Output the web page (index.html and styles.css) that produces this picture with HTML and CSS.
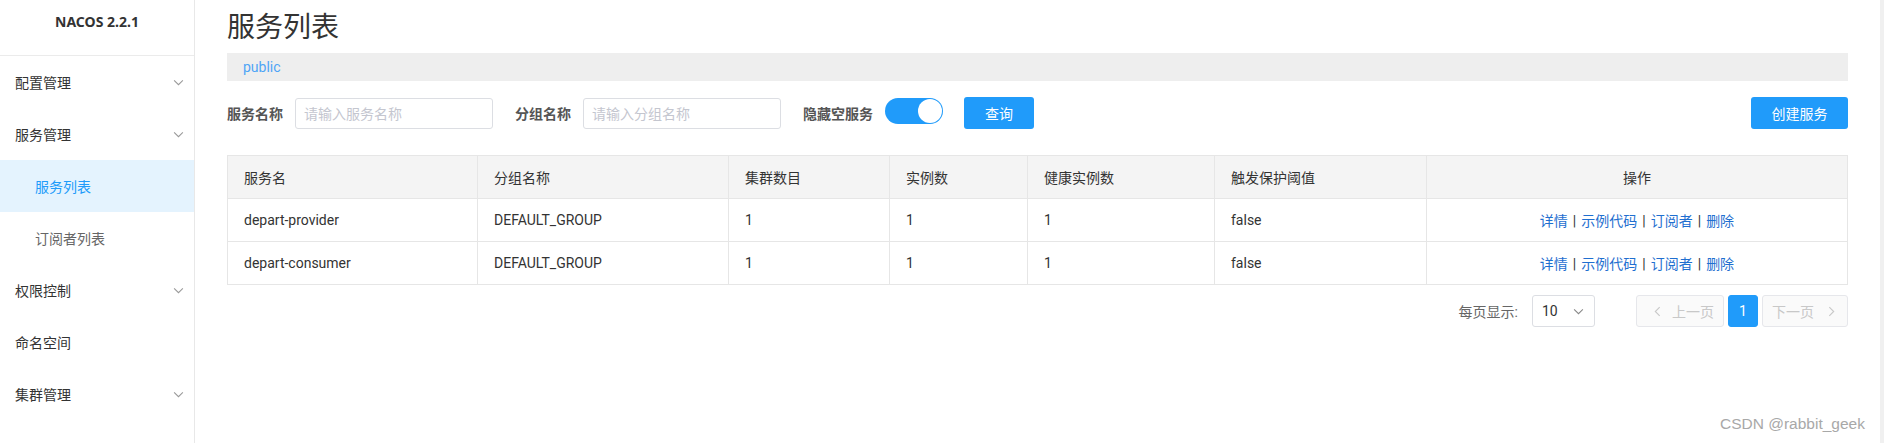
FILE: index.html
```html
<!DOCTYPE html>
<html lang="zh-CN">
<head>
<meta charset="utf-8">
<title>服务列表</title>
<link rel="stylesheet" href="styles.css">
</head>
<body>
<div class="layout">
  <aside class="sidebar">
    <div class="logo">NACOS 2.2.1</div>
    <ul class="menu">
      <li class="menu-item"><span>配置管理</span><svg class="chev" viewBox="0 0 12 8"><path d="M1 1.5 L6 6.5 L11 1.5" /></svg></li>
      <li class="menu-item"><span>服务管理</span><svg class="chev" viewBox="0 0 12 8"><path d="M1 1.5 L6 6.5 L11 1.5" /></svg></li>
      <li class="menu-item sub active"><span>服务列表</span></li>
      <li class="menu-item sub"><span>订阅者列表</span></li>
      <li class="menu-item"><span>权限控制</span><svg class="chev" viewBox="0 0 12 8"><path d="M1 1.5 L6 6.5 L11 1.5" /></svg></li>
      <li class="menu-item"><span>命名空间</span></li>
      <li class="menu-item"><span>集群管理</span><svg class="chev" viewBox="0 0 12 8"><path d="M1 1.5 L6 6.5 L11 1.5" /></svg></li>
    </ul>
  </aside>
  <main class="main">
    <h1 class="title">服务列表</h1>
    <div class="ns-bar"><span class="ns">public</span></div>
    <div class="toolbar">
      <div class="form-item">
        <label class="form-label">服务名称</label>
        <div class="input"><span class="placeholder">请输入服务名称</span></div>
      </div>
      <div class="form-item">
        <label class="form-label">分组名称</label>
        <div class="input"><span class="placeholder">请输入分组名称</span></div>
      </div>
      <div class="form-item">
        <label class="form-label">隐藏空服务</label>
        <div class="switch"><span class="knob"></span></div>
      </div>
      <button class="btn btn-primary btn-query">查询</button>
      <div class="spacer"></div>
      <button class="btn btn-primary btn-create">创建服务</button>
    </div>
    <table class="table">
      <colgroup>
        <col style="width:250px"><col style="width:251px"><col style="width:161px"><col style="width:138px"><col style="width:187px"><col style="width:212px"><col>
      </colgroup>
      <thead>
        <tr><th>服务名</th><th>分组名称</th><th>集群数目</th><th>实例数</th><th>健康实例数</th><th>触发保护阈值</th><th class="center">操作</th></tr>
      </thead>
      <tbody>
        <tr><td>depart-provider</td><td>DEFAULT_GROUP</td><td>1</td><td>1</td><td>1</td><td>false</td>
          <td class="center"><a class="link">详情</a><span class="sep">|</span><a class="link">示例代码</a><span class="sep">|</span><a class="link">订阅者</a><span class="sep">|</span><a class="link">删除</a></td></tr>
        <tr><td>depart-consumer</td><td>DEFAULT_GROUP</td><td>1</td><td>1</td><td>1</td><td>false</td>
          <td class="center"><a class="link">详情</a><span class="sep">|</span><a class="link">示例代码</a><span class="sep">|</span><a class="link">订阅者</a><span class="sep">|</span><a class="link">删除</a></td></tr>
      </tbody>
    </table>
    <div class="pager">
      <span class="page-size-label">每页显示:</span>
      <div class="select"><span>10</span><svg class="chev-sm" viewBox="0 0 12 8"><path d="M1 1.5 L6 6.5 L11 1.5" /></svg></div>
      <div class="pages">
        <button class="page-btn prev" disabled><svg class="arrow" viewBox="0 0 8 12"><path d="M6.5 1 L1.5 6 L6.5 11" /></svg><span>上一页</span></button>
        <button class="page-btn current">1</button>
        <button class="page-btn next" disabled><span>下一页</span><svg class="arrow" viewBox="0 0 8 12"><path d="M1.5 1 L6.5 6 L1.5 11" /></svg></button>
      </div>
    </div>
  </main>
  <div class="scroll-strip"></div>
</div>
<div class="watermark">CSDN @rabbit_geek</div>
</body>
</html>
```
FILE: styles.css
```css
* { box-sizing: border-box; }
html, body { margin: 0; padding: 0; }
body {
  width: 1884px;
  height: 443px;
  overflow: hidden;
  background: #fff;
  font-family: Roboto, "Noto Sans CJK SC", sans-serif;
  font-size: 14px;
  color: #333;
  position: relative;
}
.layout { display: flex; height: 443px; }

/* Sidebar */
.sidebar {
  width: 195px;
  flex: 0 0 195px;
  border-right: 1px solid #e8e8e8;
  height: 100%;
}
.logo {
  height: 56px;
  border-bottom: 1px solid #ebebeb;
  text-align: center;
  font-family: "Noto Sans", "Noto Sans CJK SC", sans-serif;
  font-weight: 700;
  font-size: 14px;
  line-height: 44px;
  color: #333;
}
.menu { list-style: none; margin: 0; padding: 0; }
.menu-item {
  height: 52px;
  display: flex;
  align-items: center;
  justify-content: space-between;
  padding: 0 10px 0 15px;
  font-size: 14px;
  color: #333;
}
.menu-item.sub { padding-left: 35px; color: #666; }
.menu-item.active { background: #e4f3fe; color: #209bfa; }
.chev { width: 11px; height: 7px; fill: none; stroke: #999; stroke-width: 1.2; }

/* Main */
.main {
  flex: 1;
  padding: 8px 32px 0 32px;
  min-width: 0;
}
.title {
  margin: 0;
  font-size: 28px;
  font-weight: 400;
  line-height: 40px;
  color: #333;
}
.ns-bar {
  margin-top: 5px;
  height: 28px;
  background: #eeeeee;
  display: flex;
  align-items: center;
  padding-left: 16px;
}
.ns { color: #4ea5f6; font-size: 14px; }

.toolbar {
  margin-top: 16px;
  display: flex;
  align-items: center;
  height: 32px;
  gap: 22px;
}
.form-item { display: flex; align-items: center; gap: 12px; }
.form-label { font-weight: 700; color: #555; font-size: 14px; }
.input {
  width: 198px;
  height: 31px;
  border: 1px solid #dcdee3;
  border-radius: 3px;
  display: flex;
  align-items: center;
  padding-left: 8px;
}
.placeholder { color: #c4c6cf; font-size: 14px; }
.switch {
  width: 58px;
  height: 26px;
  border-radius: 13px;
  background: #209bfa;
  position: relative;
  margin-top: -5px;
}
.knob {
  position: absolute;
  right: 1px;
  top: 1px;
  width: 24px;
  height: 24px;
  border-radius: 50%;
  background: #fff;
}
.btn {
  border: none;
  border-radius: 3px;
  font-family: Roboto, "Noto Sans CJK SC", sans-serif;
  font-size: 14px;
  height: 32px;
  padding: 0;
  cursor: pointer;
}
.btn-primary { background: #209bfa; color: #fff; }
.btn-query { width: 70px; margin-left: -1px; }
.btn-create { width: 97px; }
.spacer { flex: 1; }

/* Table */
.table {
  margin-top: 26px;
  width: 100%;
  border-collapse: collapse;
  table-layout: fixed;
}
.table th, .table td {
  height: 43px;
  padding: 0 16px;
  border: 1px solid #e6e6e6;
  text-align: left;
  font-size: 14px;
  font-weight: 400;
  color: #333;
  white-space: nowrap;
}
.table th { background: #f4f4f4; }
.table .center { text-align: center; }
.link { color: #1f6fd0; text-decoration: none; }
.sep { color: #333; margin: 0 5px; }

/* Pager */
.pager {
  margin-top: 10px;
  display: flex;
  justify-content: flex-end;
  align-items: center;
  height: 32px;
}
.page-size-label { color: #666; font-size: 14px; margin-right: 14px; }
.select {
  width: 63px;
  height: 32px;
  border: 1px solid #dcdee3;
  border-radius: 3px;
  display: flex;
  align-items: center;
  justify-content: space-between;
  padding: 0 10px 0 9px;
  color: #333;
}
.chev-sm { width: 11px; height: 7px; fill: none; stroke: #888; stroke-width: 1.2; }
.pages { display: flex; gap: 4px; margin-left: 41px; }
.page-btn {
  height: 32px;
  border: 1px solid #e6e7eb;
  border-radius: 3px;
  background: #fafafa;
  color: #c8c8c8;
  font-family: Roboto, "Noto Sans CJK SC", sans-serif;
  font-size: 14px;
  display: flex;
  align-items: center;
  padding: 0;
}
.page-btn.prev { width: 88px; padding-left: 17px; gap: 11px; }
.page-btn.next { width: 86px; padding-left: 9px; gap: 14px; }
.page-btn.current {
  width: 30px;
  background: #209bfa;
  border-color: #209bfa;
  color: #fff;
  justify-content: center;
}
.arrow { width: 7px; height: 11px; fill: none; stroke: #c8c8c8; stroke-width: 1.3; }

.scroll-strip { width: 4px; flex: 0 0 4px; background: #f0f0f0; }

.watermark {
  position: absolute;
  left: 1720px;
  top: 415px;
  font-family: "Liberation Sans", sans-serif;
  font-size: 15.5px;
  color: #a8a8a8;
}
```
